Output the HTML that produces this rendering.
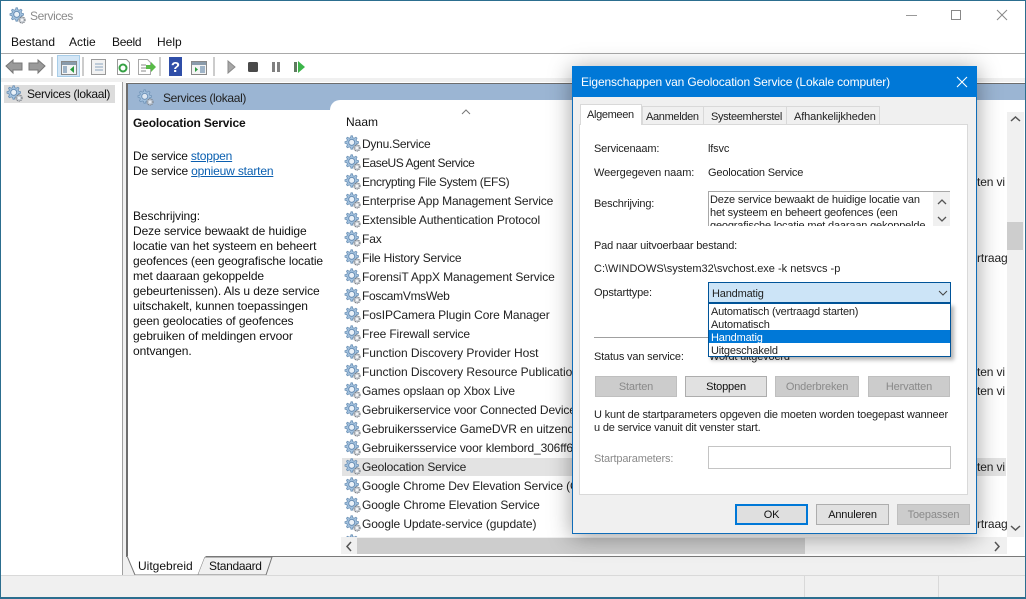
<!DOCTYPE html>
<html><head><meta charset="utf-8"><style>
*{box-sizing:border-box}
html,body{margin:0;padding:0;background:#fff}
body{width:1026px;height:599px;position:relative;overflow:hidden;font-family:"Liberation Sans",sans-serif;font-size:12px;color:#111}
.a{position:absolute}
.t{position:absolute;white-space:nowrap;line-height:14px}
.r{position:absolute;left:362px;white-space:nowrap;line-height:14px;font-size:12px;color:#222;letter-spacing:-.13px;margin-top:1px}
.g{position:absolute;left:344px;width:17px;height:17px}
.d{position:absolute;white-space:nowrap;line-height:13px;font-size:11px;color:#222;letter-spacing:-.17px;margin-top:1px}
.b{position:absolute;height:21px;border:1px solid #adadad;background:#e1e1e1;text-align:center;line-height:21px;font-size:11px;color:#111;letter-spacing:-.17px}
.off{background:#ccc;border-color:#bfbfbf;color:#8a8a8a}
a{color:#0a5fb0;text-decoration:underline}
</style></head><body>
<svg width="0" height="0" style="position:absolute"><defs>
<g id="gear"><path d="M7 .8l1.400 0 .5 1.900 1.300.5 1.700-1 1.100 1-.9 1.700.5 1.300 1.900.5v1.500l-1.900.5-.5 1.300.9 1.700-1.100 1.100-1.700-.9-1.300.5-.5 1.800H7l-.5-1.800-1.300-.5-1.700.9-1-1.100.9-1.700-.6-1.300-1.800-.5V6.700l1.800-.5.6-1.300-.9-1.700 1-1 1.700 1 1.300-.5z" fill="#a3c2df" stroke="#6b90b5" stroke-width=".8"/><circle cx="7.700" cy="7.400" r="3" fill="#eaf1f8" stroke="#6a8fb5"/><circle cx="13" cy="13" r="3" fill="#cdd2d8" stroke="#777c83" stroke-width="1.200" stroke-dasharray="1.200 .7"/><circle cx="13" cy="13" r="1" fill="#fff"/></g>
</defs></svg>

<!-- window frame -->
<div class="a" style="left:0;top:0;width:1026px;height:599px;border:1px solid #2c6e8f;border-width:1px 1px 2px 1px;z-index:9;pointer-events:none"></div>

<svg class="a" style="left:9px;top:7px" width="17" height="17"><use href="#gear"/></svg>
<div class="t" style="left:30px;top:9px;color:#8b8b8b;font-size:12px;letter-spacing:-.4px">Services</div>
<div class="a" style="left:906px;top:15px;width:11px;height:1px;background:#999"></div>
<div class="a" style="left:951px;top:10px;width:10px;height:10px;border:1px solid #888"></div>
<svg class="a" style="left:996px;top:9px" width="12" height="12"><path d="M1 1l10 10M11 1L1 11" stroke="#888" fill="none"/></svg>

<div class="t" style="left:11px;top:35px;font-size:12px">Bestand</div>
<div class="t" style="left:69px;top:35px;font-size:12px">Actie</div>
<div class="t" style="left:112px;top:35px;font-size:12px;letter-spacing:-.3px">Beeld</div>
<div class="t" style="left:157px;top:35px;font-size:12px">Help</div>
<div class="a" style="left:1px;top:53px;width:1024px;height:1px;background:#a9a9a9"></div>

<!-- toolbar -->
<svg class="a" style="left:0;top:54px" width="320" height="26">
<path d="M6 12l7-6v3h9v7h-9v3z" fill="#9a9a9a" stroke="#777"/>
<path d="M45 12l-7-6v3h-9v7h9v3z" fill="#9a9a9a" stroke="#777"/>
<rect x="51.500" y="3" width="1" height="19" fill="#999"/>
<rect x="57.500" y="1.500" width="22" height="21" fill="#d3e6f6" stroke="#a8cde8"/>
<rect x="61.500" y="7.500" width="15" height="13" fill="#f4f4f4" stroke="#888"/><rect x="62" y="8" width="14" height="3" fill="#8a9bab"/><rect x="63" y="12" width="4" height="7" fill="#9fb4c8"/><path d="M74 12v7l-4-3.500z" fill="#2b9a3f"/>
<rect x="82.500" y="3" width="1" height="19" fill="#999"/>
<rect x="91.500" y="5.500" width="14" height="15" fill="#f2f2f2" stroke="#999"/><path d="M95 10h8M95 13h8M95 16h8" stroke="#8aa4bf"/>
<path d="M117.500 5.500h9l3 3v12h-12z" fill="#fff" stroke="#999"/><circle cx="123" cy="14" r="3.500" fill="none" stroke="#35a043" stroke-width="2"/>
<path d="M138.500 5.500h9l3 3v12h-12z" fill="#fff" stroke="#a8a8a8"/><path d="M141 11h5M141 14h5M141 17h5" stroke="#8a8a8a"/><path d="M146 11h5V8l5 5-5 5v-3h-5z" fill="#58b947"/>
<rect x="159.500" y="3" width="1" height="19" fill="#999"/>
<rect x="169" y="3" width="13" height="19" fill="#2f4ea8"/><text x="175.500" y="18" font-size="15" font-weight="bold" fill="#fff" text-anchor="middle" font-family="Liberation Sans">?</text>
<rect x="191.500" y="7.500" width="15" height="13" fill="#f4f4f4" stroke="#888"/><rect x="192" y="8" width="14" height="3" fill="#8a9bab"/><path d="M195 13v5l3-2.500z" fill="#2b9a3f"/><rect x="200" y="12" width="5" height="7" fill="#9fb4c8"/>
<rect x="213.500" y="3" width="1" height="19" fill="#999"/>
<path d="M228 7l7 6-7 6z" fill="#a7a7a7" stroke="#8a8a8a"/>
<rect x="248" y="8" width="10" height="10" rx="1.500" fill="#4a4a4a"/>
<rect x="272" y="8" width="3" height="10" fill="#808080"/><rect x="277" y="8" width="3" height="10" fill="#808080"/>
<rect x="294" y="8" width="3" height="10" fill="#5f7a5f"/><path d="M298 7l7 6-7 6z" fill="#3cb54a"/>
</svg>
<div class="a" style="left:1px;top:78px;width:1024px;height:4px;background:#f0f0f0"></div>

<!-- left pane -->
<div class="a" style="left:2px;top:82px;width:121px;height:493px;background:#fff;border-right:1px solid #a0a0a0"></div>
<div class="a" style="left:4px;top:85px;width:111px;height:18px;background:#dcdcdc"></div>
<svg class="a" style="left:6px;top:85px" width="17" height="17"><use href="#gear"/></svg>
<div class="t" style="left:27px;top:87px;font-size:12px;letter-spacing:-.33px">Services (lokaal)</div>

<div class="a" style="left:123px;top:82px;width:3px;height:493px;background:#f0f0f0"></div>
<!-- right pane -->
<div class="a" style="left:126px;top:83px;width:900px;height:474px;background:#fff;border-left:2px solid #6d6d6d;border-top:1px solid #6d6d6d"></div>
<div class="a" style="left:128px;top:84px;width:897px;height:26px;background:#9bb5d3"></div>
<div class="a" style="left:330px;top:100px;width:695px;height:20px;background:#fff;border-radius:10px 0 0 0"></div>
<svg class="a" style="left:137px;top:89px" width="17" height="17" opacity=".85"><use href="#gear"/></svg>
<div class="t" style="left:163px;top:91px;font-size:12px;color:#222;letter-spacing:-.33px">Services (lokaal)</div>

<div class="t" style="left:133px;top:116px;font-weight:bold;font-size:12px;letter-spacing:-.15px">Geolocation Service</div>
<div class="t" style="left:133px;top:149px;font-size:12px;letter-spacing:-.2px">De service <a>stoppen</a></div>
<div class="t" style="left:133px;top:164px;font-size:12px;letter-spacing:-.17px">De service <a>opnieuw starten</a></div>
<div class="t" style="left:133px;top:208.500px;font-size:12px;line-height:15.100px;letter-spacing:-.08px">Beschrijving:<br>Deze service bewaakt de huidige<br>locatie van het systeem en beheert<br>geofences (een geografische locatie<br>met daaraan gekoppelde<br>gebeurtenissen). Als u deze service<br>uitschakelt, kunnen toepassingen<br>geen geolocaties of geofences<br>gebruiken of meldingen ervoor<br>ontvangen.</div>

<div class="t" style="left:346px;top:115px;font-size:12px">Naam</div>
<svg class="a" style="left:461px;top:109px" width="10" height="6"><path d="M1 5l4-4 4 4" stroke="#777" fill="none"/></svg>

<!-- list -->
<div class="a" style="left:342px;top:458px;width:664px;height:18px;background:#e3e3e3"></div>
<div class="r" style="top:136px;letter-spacing:-.25px">Dynu.Service</div>
<div class="r" style="top:155px;letter-spacing:-.45px">EaseUS Agent Service</div>
<div class="r" style="top:174px;letter-spacing:-.36px">Encrypting File System (EFS)</div>
<div class="r" style="top:193px">Enterprise App Management Service</div>
<div class="r" style="top:212px;letter-spacing:-.1px">Extensible Authentication Protocol</div>
<div class="r" style="top:231px">Fax</div>
<div class="r" style="top:250px;letter-spacing:-.2px">File History Service</div>
<div class="r" style="top:269px;letter-spacing:-.1px">ForensiT AppX Management Service</div>
<div class="r" style="top:288px;letter-spacing:-.3px">FoscamVmsWeb</div>
<div class="r" style="top:307px;letter-spacing:-.1px">FosIPCamera Plugin Core Manager</div>
<div class="r" style="top:326px">Free Firewall service</div>
<div class="r" style="top:345px;letter-spacing:-.05px">Function Discovery Provider Host</div>
<div class="r" style="top:364px;letter-spacing:-.05px">Function Discovery Resource Publication</div>
<div class="r" style="top:383px;letter-spacing:-.15px">Games opslaan op Xbox Live</div>
<div class="r" style="top:402px">Gebruikerservice voor Connected Devices</div>
<div class="r" style="top:421px">Gebruikersservice GameDVR en uitzending</div>
<div class="r" style="top:440px">Gebruikersservice voor klembord_306ff6</div>
<div class="r" style="top:459px;letter-spacing:-.17px">Geolocation Service</div>
<div class="r" style="top:478px">Google Chrome Dev Elevation Service (G</div>
<div class="r" style="top:497px;letter-spacing:-.1px">Google Chrome Elevation Service</div>
<div class="r" style="top:516px;letter-spacing:-.1px">Google Update-service (gupdate)</div>
<svg class="g" style="top:135px"><use href="#gear"/></svg>
<svg class="g" style="top:154px"><use href="#gear"/></svg>
<svg class="g" style="top:173px"><use href="#gear"/></svg>
<svg class="g" style="top:192px"><use href="#gear"/></svg>
<svg class="g" style="top:211px"><use href="#gear"/></svg>
<svg class="g" style="top:230px"><use href="#gear"/></svg>
<svg class="g" style="top:249px"><use href="#gear"/></svg>
<svg class="g" style="top:268px"><use href="#gear"/></svg>
<svg class="g" style="top:287px"><use href="#gear"/></svg>
<svg class="g" style="top:306px"><use href="#gear"/></svg>
<svg class="g" style="top:325px"><use href="#gear"/></svg>
<svg class="g" style="top:344px"><use href="#gear"/></svg>
<svg class="g" style="top:363px"><use href="#gear"/></svg>
<svg class="g" style="top:382px"><use href="#gear"/></svg>
<svg class="g" style="top:401px"><use href="#gear"/></svg>
<svg class="g" style="top:420px"><use href="#gear"/></svg>
<svg class="g" style="top:439px"><use href="#gear"/></svg>
<svg class="g" style="top:458px"><use href="#gear"/></svg>
<svg class="g" style="top:477px"><use href="#gear"/></svg>
<svg class="g" style="top:496px"><use href="#gear"/></svg>
<svg class="g" style="top:515px"><use href="#gear"/></svg>
<div class="a" style="left:344px;top:534px;width:17px;height:3px;overflow:hidden"><svg width="17" height="17"><use href="#gear"/></svg></div>

<!-- right column fragments -->
<div class="r" style="left:977px;top:174px;width:30px;overflow:hidden">ten vi</div>
<div class="r" style="left:977px;top:250px;width:30px;overflow:hidden">rtraag</div>
<div class="r" style="left:977px;top:364px;width:30px;overflow:hidden">ten vi</div>
<div class="r" style="left:977px;top:383px;width:30px;overflow:hidden">ten vi</div>
<div class="r" style="left:977px;top:459px;width:30px;overflow:hidden">ten vi</div>
<div class="r" style="left:977px;top:516px;width:30px;overflow:hidden">rtraag</div>

<!-- scrollbars -->
<div class="a" style="left:1007px;top:112px;width:17px;height:425px;background:#f0f0f0"></div>
<div class="a" style="left:1007px;top:222px;width:16px;height:28px;background:#cdcdcd"></div>
<svg class="a" style="left:1010px;top:115px" width="11" height="8"><path d="M1 6l4.500-4 4.500 4" stroke="#555" stroke-width="1.500" fill="none"/></svg>
<svg class="a" style="left:1010px;top:524px" width="11" height="8"><path d="M1 2l4.500 4 4.500-4" stroke="#555" stroke-width="1.500" fill="none"/></svg>
<div class="a" style="left:341px;top:537px;width:666px;height:17px;background:#f0f0f0"></div>
<div class="a" style="left:357px;top:538px;width:448px;height:16px;background:#cdcdcd"></div>
<svg class="a" style="left:345px;top:541px" width="8" height="11"><path d="M6 1L2 5.500 6 10" stroke="#555" stroke-width="1.500" fill="none"/></svg>
<svg class="a" style="left:993px;top:541px" width="8" height="11"><path d="M2 1l4 4.500L2 10" stroke="#555" stroke-width="1.500" fill="none"/></svg>

<!-- tabs strip -->
<div class="a" style="left:126px;top:556px;width:900px;height:19px;background:#f0f0f0;border-top:1px solid #7a7a7a"></div>
<svg class="a" style="left:120px;top:555px" width="160" height="21">
<path d="M7 1L15 20H78L86 1z" fill="#fff"/>
<path d="M7 1L15 20H78M78 20L85 2" stroke="#777" fill="none"/>
<path d="M85 2H152L146 20H78" fill="#f0f0f0" stroke="#777"/>
</svg>
<div class="t" style="left:138px;top:559px;font-size:12px">Uitgebreid</div>
<div class="t" style="left:209px;top:559px;font-size:12px;letter-spacing:-.3px">Standaard</div>

<!-- status bar -->
<div class="a" style="left:1px;top:575px;width:1024px;height:22px;background:#f0f0f0;border-top:1px solid #d9d9d9"></div>
<div class="a" style="left:804px;top:576px;width:1px;height:21px;background:#d9d9d9"></div>
<div class="a" style="left:938px;top:576px;width:1px;height:21px;background:#d9d9d9"></div>

<!-- DIALOG -->
<div class="a" style="left:572px;top:66px;width:405px;height:468px;background:#f0f0f0;border:1px solid #0f6cb8;box-shadow:0 3px 22px rgba(0,0,0,.38);z-index:5"></div>
<div style="position:absolute;left:0;top:0;z-index:6">
<div class="a" style="left:572px;top:66px;width:405px;height:31px;background:#0078d7"></div>
<div class="t" style="left:581px;top:75px;color:#fff;font-size:12px;letter-spacing:-.13px">Eigenschappen van Geolocation Service (Lokale computer)</div>
<svg class="a" style="left:956px;top:76px" width="12" height="12"><path d="M1 1l10 10M11 1L1 11" stroke="#fff" stroke-width="1.100" fill="none"/></svg>

<div class="a" style="left:579px;top:124px;width:389px;height:371px;background:#fff;border:1px solid #d9d9d9"></div>
<div class="a" style="left:642px;top:106px;width:62px;height:19px;background:#f0f0f0;border:1px solid #d9d9d9"></div>
<div class="a" style="left:704px;top:106px;width:83px;height:19px;background:#f0f0f0;border:1px solid #d9d9d9;border-left:0"></div>
<div class="a" style="left:787px;top:106px;width:93px;height:19px;background:#f0f0f0;border:1px solid #d9d9d9;border-left:0"></div>
<div class="a" style="left:580px;top:104px;width:62px;height:21px;background:#fff;border:1px solid #d9d9d9;border-bottom:0"></div>
<div class="d" style="left:587px;top:108px;letter-spacing:-.35px">Algemeen</div>
<div class="d" style="left:646px;top:110px;letter-spacing:-.33px">Aanmelden</div>
<div class="d" style="left:711px;top:110px;letter-spacing:-.35px">Systeemherstel</div>
<div class="d" style="left:794px;top:110px;letter-spacing:-.13px">Afhankelijkheden</div>

<div class="d" style="left:594px;top:142px">Servicenaam:</div>
<div class="d" style="left:708px;top:142px">lfsvc</div>
<div class="d" style="left:594px;top:166px;letter-spacing:-.1px">Weergegeven naam:</div>
<div class="d" style="left:708px;top:166px">Geolocation Service</div>
<div class="d" style="left:594px;top:197px">Beschrijving:</div>
<div class="a" style="left:708px;top:191px;width:242px;height:35px;border:1px solid #a8a8a8;border-bottom:0;border-right:0;background:#fff;overflow:hidden">
<div class="d" style="left:1px;top:1px">Deze service bewaakt de huidige locatie van<br>het systeem en beheert geofences (een<br>geografische locatie met daaraan gekoppelde</div>
<div class="a" style="right:0;top:0;width:17px;height:35px;background:#f0f0f0"></div>
<svg class="a" style="right:3px;top:7px" width="10" height="24"><path d="M1 5l4-4 4 4M1 18l4 4 4-4" stroke="#555" stroke-width="1.300" fill="none"/></svg>
</div>
<div class="d" style="left:594px;top:239px">Pad naar uitvoerbaar bestand:</div>
<div class="d" style="left:594px;top:262px;letter-spacing:0">C:\WINDOWS\system32\svchost.exe -k netsvcs -p</div>
<div class="d" style="left:594px;top:286px">Opstarttype:</div>
<div class="a" style="left:708px;top:282px;width:243px;height:21px;background:#cce4f7;border:1px solid #005499"></div>
<div class="d" style="left:712px;top:287px">Handmatig</div>
<svg class="a" style="left:938px;top:290px" width="10" height="6"><path d="M1 1l4 4 4-4" stroke="#444" fill="none"/></svg>
<div class="a" style="left:594px;top:337px;width:120px;height:1px;background:#a0a0a0"></div>
<div class="d" style="left:594px;top:350px">Status van service:</div>
<div class="d" style="left:709px;top:350px">Wordt uitgevoerd</div>
<div class="a" style="left:708px;top:303px;width:243px;height:54px;background:#fff;border:1px solid #005499;box-shadow:3px 3px 4px rgba(0,0,0,.3)"></div>
<div class="a" style="left:709px;top:330px;width:241px;height:13px;background:#0078d7"></div>
<div class="d" style="left:711px;top:305px;letter-spacing:-.22px">Automatisch (vertraagd starten)</div>
<div class="d" style="left:711px;top:318px">Automatisch</div>
<div class="d" style="left:711px;top:331px;color:#fff">Handmatig</div>
<div class="d" style="left:711px;top:344px">Uitgeschakeld</div>

<div class="b off" style="left:595px;top:376px;width:82px">Starten</div>
<div class="b" style="left:685px;top:376px;width:82px">Stoppen</div>
<div class="b off" style="left:775px;top:376px;width:84px">Onderbreken</div>
<div class="b off" style="left:868px;top:376px;width:82px">Hervatten</div>
<div class="d" style="left:594px;top:408px">U kunt de startparameters opgeven die moeten worden toegepast wanneer</div>
<div class="d" style="left:594px;top:421px">u de service vanuit dit venster start.</div>
<div class="d" style="left:594px;top:452px;color:#8a8a8a">Startparameters:</div>
<div class="a" style="left:708px;top:446px;width:243px;height:23px;background:#fff;border:1px solid #c4c4c4"></div>
<div class="b" style="left:735px;top:504px;width:73px;border:2px solid #0078d7;line-height:19px;background:#dfdfdf">OK</div>
<div class="b" style="left:816px;top:504px;width:73px">Annuleren</div>
<div class="b off" style="left:897px;top:504px;width:73px">Toepassen</div>
</div>
</body></html>
